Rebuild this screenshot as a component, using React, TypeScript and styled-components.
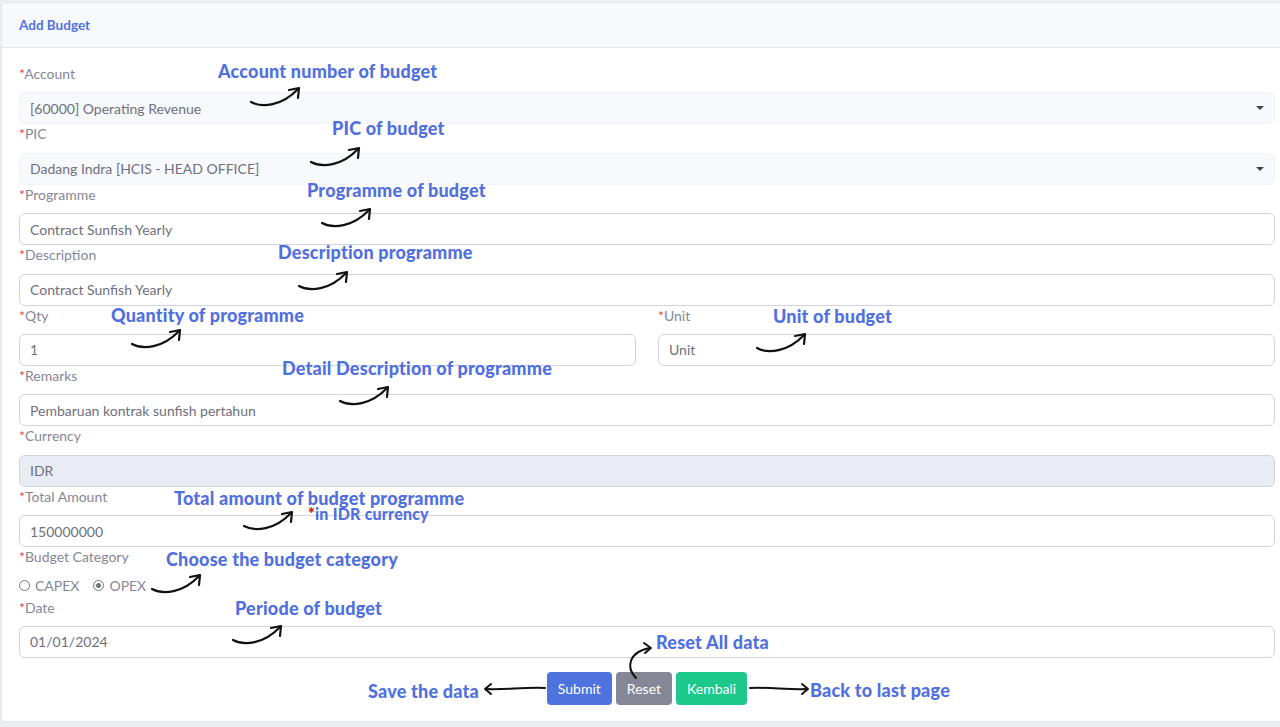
import styled, { createGlobalStyle } from 'styled-components';

const GlobalStyle = createGlobalStyle`
  html, body {
    margin: 0;
    padding: 0;
    background: #eceef2;
    overflow: hidden;
  }
  body {
    font-family: 'Lato', 'Noto Sans', sans-serif;
  }
`;

const Page = styled.div`
  position: relative;
  width: 1280px;
  height: 727px;
  padding-top: 2px;
  box-sizing: border-box;
`;

const Card = styled.div`
  margin-left: 1px;
  width: 1279px;
  height: 720px;
  background: #fff;
  border: 1px solid #e3e6f0;
  border-right: none;
  border-radius: 4px 0 0 4px;
  box-sizing: border-box;
`;

const CardHeader = styled.div`
  height: 44px;
  padding: 0 17px;
  display: flex;
  align-items: center;
  background: #f8f9fc;
  border-bottom: 1px solid #e3e6f0;
  color: #4e73df;
  font-weight: 700;
  font-size: 13.5px;
`;

const CardBody = styled.div`
  padding: 16px 5px 0 17px;
`;

const Field = styled.div`
  display: flex;
  flex-direction: column;
`;

const Row = styled.div`
  display: grid;
  grid-template-columns: 1fr 1fr;
  column-gap: 22px;
`;

const Label = styled.label`
  height: 20px;
  line-height: 20px;
  margin-bottom: 8.4px;
  font-size: 14px;
  color: #858796;
`;

const Star = styled.span`
  color: #e74a3b;
`;

const Input = styled.div<{ $disabled?: boolean }>`
  height: 32px;
  box-sizing: border-box;
  border: 1px solid #d1d3e2;
  border-radius: 6px;
  background: ${({ $disabled }) => ($disabled ? '#eaecf4' : '#fff')};
  padding: 0 10px;
  display: flex;
  align-items: center;
  font-size: 14px;
  color: #6e707e;
`;

const Select = styled(Input)`
  background: #f8f9fc;
  border-color: #f3f4f8;
  justify-content: space-between;
  padding-right: 10px;
`;

const Caret = styled.span`
  width: 0;
  height: 0;
  border-left: 4px solid transparent;
  border-right: 4px solid transparent;
  border-top: 4px solid #444;
`;

const RadioRow = styled.div`
  height: 20px;
  margin-bottom: 2px;
  display: flex;
  align-items: center;
  gap: 14px;
  font-size: 14px;
  color: #858796;
`;

const RadioItem = styled.span`
  display: flex;
  align-items: center;
  gap: 5px;
`;

const RadioDot = styled.span<{ $checked?: boolean }>`
  width: 9px;
  height: 9px;
  border-radius: 50%;
  border: 1px solid #777;
  box-sizing: content-box;
  position: relative;
  background: #fff;
  &::after {
    content: '';
    display: ${({ $checked }) => ($checked ? 'block' : 'none')};
    position: absolute;
    left: 2px;
    top: 2px;
    width: 5px;
    height: 5px;
    border-radius: 50%;
    background: #777;
  }
`;

const Actions = styled.div`
  margin-top: 14px;
  display: flex;
  justify-content: center;
  gap: 4px;
`;

const Button = styled.button<{ $color: string }>`
  height: 33px;
  padding: 0 11px;
  border: none;
  border-radius: 4px;
  background: ${({ $color }) => $color};
  color: #fff;
  font-family: inherit;
  font-size: 14px;
`;

const Note = styled.div<{ $x: number; $y: number; $size?: number }>`
  position: absolute;
  left: ${({ $x }) => $x}px;
  top: ${({ $y }) => $y}px;
  font-size: ${({ $size }) => $size ?? 18}px;
  line-height: 1;
  font-weight: 900;
  color: #5070e0;
  white-space: nowrap;
  letter-spacing: 0.2px;
`;

const NoteStar = styled.span`
  color: #d01010;
`;

const Arrow = styled.svg<{ $x: number; $y: number }>`
  position: absolute;
  left: ${({ $x }) => $x}px;
  top: ${({ $y }) => $y}px;
  overflow: visible;
`;

const CurlyArrow = ({ x, y }: { x: number; y: number }) => (
  <Arrow $x={x} $y={y} width="52" height="22" viewBox="0 0 52 22" fill="none">
    <path d="M1 16 C 12 22, 32 20, 48 3" stroke="#111" strokeWidth="2.2" strokeLinecap="round" />
    <path d="M39 4 L 49 2 L 48 12" stroke="#111" strokeWidth="2.2" strokeLinecap="round" strokeLinejoin="round" />
  </Arrow>
);

const notes = [
  { x: 218, y: 62, text: 'Account number of budget', ax: 250, ay: 86 },
  { x: 332, y: 119, text: 'PIC of budget', ax: 310, ay: 146 },
  { x: 307, y: 181, text: 'Programme of budget', ax: 321, ay: 207 },
  { x: 278, y: 243, text: 'Description programme', ax: 298, ay: 270 },
  { x: 111, y: 306, text: 'Quantity of programme', ax: 131, ay: 328 },
  { x: 773, y: 307, text: 'Unit of budget', ax: 756, ay: 332 },
  { x: 282, y: 359, text: 'Detail Description of programme', ax: 339, ay: 385 },
  { x: 174, y: 489, text: 'Total amount of budget programme', ax: 243, ay: 510 },
  { x: 166, y: 550, text: 'Choose the budget category', ax: 151, ay: 573 },
  { x: 235, y: 599, text: 'Periode of budget', ax: 232, ay: 624 },
];

export default function App() {
  return (
    <Page>
      <GlobalStyle />
      <Card>
        <CardHeader>Add Budget</CardHeader>
        <CardBody>
          <Field>
            <Label><Star>*</Star>Account</Label>
            <Select>[60000] Operating Revenue<Caret /></Select>
          </Field>
          <Field>
            <Label><Star>*</Star>PIC</Label>
            <Select>Dadang Indra [HCIS - HEAD OFFICE]<Caret /></Select>
          </Field>
          <Field>
            <Label><Star>*</Star>Programme</Label>
            <Input>Contract Sunfish Yearly</Input>
          </Field>
          <Field>
            <Label><Star>*</Star>Description</Label>
            <Input>Contract Sunfish Yearly</Input>
          </Field>
          <Row>
            <Field>
              <Label><Star>*</Star>Qty</Label>
              <Input>1</Input>
            </Field>
            <Field>
              <Label><Star>*</Star>Unit</Label>
              <Input>Unit</Input>
            </Field>
          </Row>
          <Field>
            <Label><Star>*</Star>Remarks</Label>
            <Input>Pembaruan kontrak sunfish pertahun</Input>
          </Field>
          <Field>
            <Label><Star>*</Star>Currency</Label>
            <Input $disabled>IDR</Input>
          </Field>
          <Field>
            <Label><Star>*</Star>Total Amount</Label>
            <Input>150000000</Input>
          </Field>
          <Field>
            <Label><Star>*</Star>Budget Category</Label>
            <RadioRow>
              <RadioItem><RadioDot />CAPEX</RadioItem>
              <RadioItem><RadioDot $checked />OPEX</RadioItem>
            </RadioRow>
          </Field>
          <Field>
            <Label><Star>*</Star>Date</Label>
            <Input>01/01/2024</Input>
          </Field>
          <Actions>
            <Button $color="#4e73df">Submit</Button>
            <Button $color="#858796">Reset</Button>
            <Button $color="#1cc88a">Kembali</Button>
          </Actions>
        </CardBody>
      </Card>

      {notes.map((n) => (
        <div key={n.text}>
          <Note $x={n.x} $y={n.y}>{n.text}</Note>
          <CurlyArrow x={n.ax} y={n.ay} />
        </div>
      ))}
      <Note $x={308} $y={506} $size={16}><NoteStar>*</NoteStar>in IDR currency</Note>

      <Note $x={656} $y={633}>Reset All data</Note>
      <Arrow $x={626} $y={640} width="30" height="40" viewBox="0 0 30 40" fill="none">
        <path d="M10 38 C 0 28, 2 12, 24 8" stroke="#111" strokeWidth="2" strokeLinecap="round" />
        <path d="M18 3 L 25 8 L 19 13" stroke="#111" strokeWidth="2" strokeLinecap="round" strokeLinejoin="round" />
      </Arrow>

      <Note $x={368} $y={682}>Save the data</Note>
      <Arrow $x={484} $y={682} width="62" height="14" viewBox="0 0 62 14" fill="none">
        <path d="M61 6 C 40 5, 20 8, 2 7" stroke="#111" strokeWidth="2" strokeLinecap="round" />
        <path d="M7 2 L 1 7 L 7 12" stroke="#111" strokeWidth="2" strokeLinecap="round" strokeLinejoin="round" />
      </Arrow>

      <Note $x={810} $y={681}>Back to last page</Note>
      <Arrow $x={749} $y={682} width="60" height="14" viewBox="0 0 60 14" fill="none">
        <path d="M1 6 C 20 5, 40 8, 58 7" stroke="#111" strokeWidth="2" strokeLinecap="round" />
        <path d="M53 2 L 59 7 L 53 12" stroke="#111" strokeWidth="2" strokeLinecap="round" strokeLinejoin="round" />
      </Arrow>
    </Page>
  );
}
